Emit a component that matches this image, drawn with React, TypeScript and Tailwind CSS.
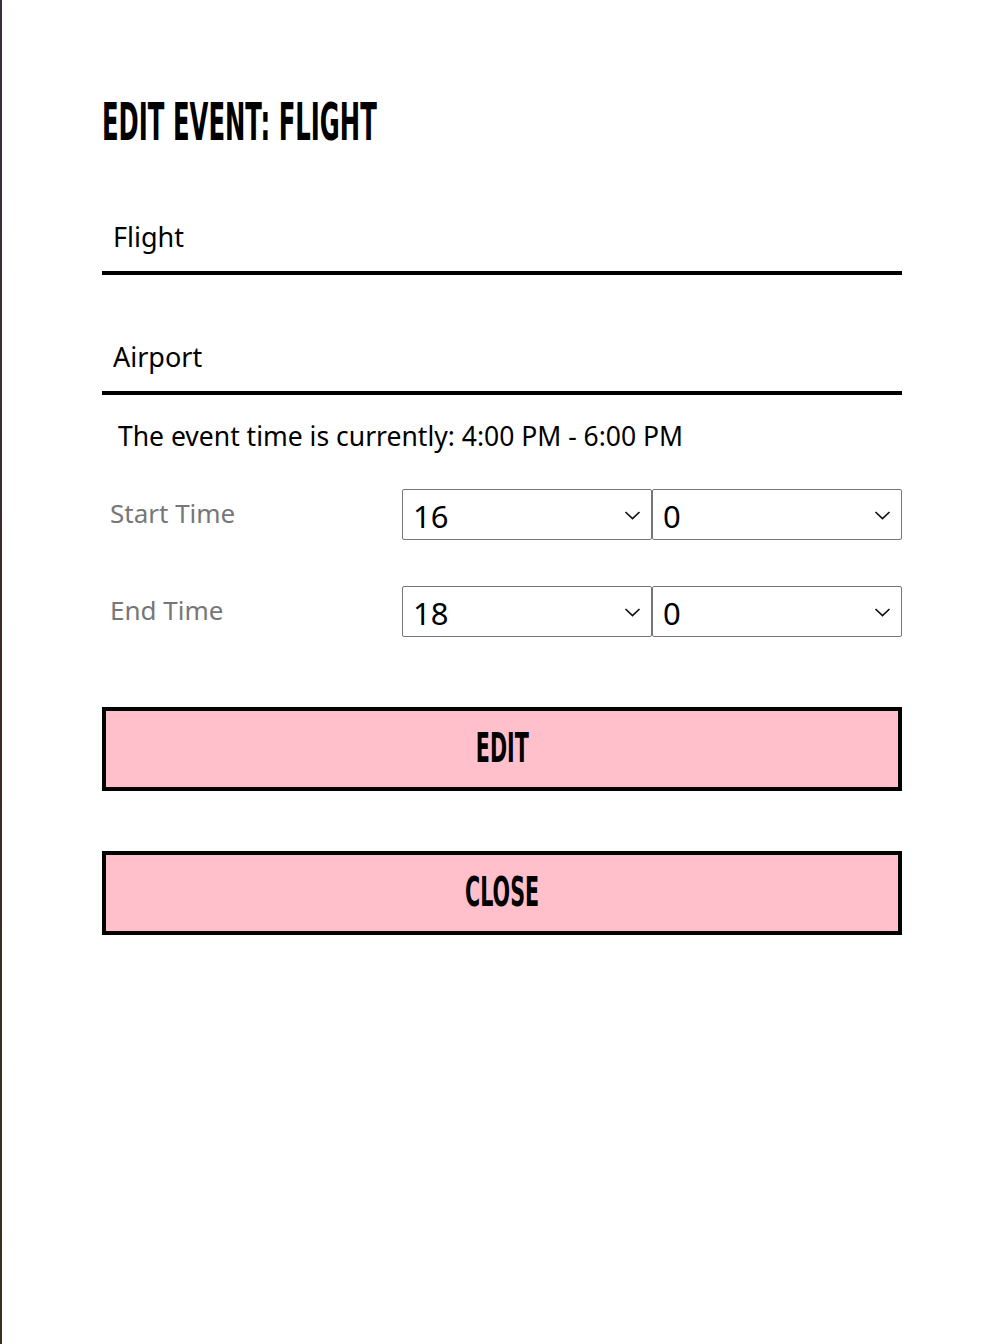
import { useState } from "react";

const hours = Array.from({ length: 24 }, (_, i) => i);
const minutes = [0, 15, 30, 45];

function Chevron() {
  return (
    <svg
      className="pointer-events-none absolute right-[11px] top-1/2 -translate-y-1/2"
      width="17"
      height="10"
      viewBox="0 0 17 10"
      fill="none"
    >
      <path d="M1.5 2 8.5 8.5 15.5 2" stroke="#111" strokeWidth="1.7" />
    </svg>
  );
}

function TimeSelect({
  value,
  options,
  onChange,
}: {
  value: number;
  options: number[];
  onChange: (v: number) => void;
}) {
  return (
    <div className="relative w-1/2">
      <select
        value={value}
        onChange={(event) => onChange(Number(event.target.value))}
        className="h-[51px] w-full appearance-none rounded-[2px] border border-[#767676] bg-white pl-[10px] pt-[3px] text-[31px] text-black outline-none"
      >
        {options.map((o) => (
          <option key={o} value={o}>
            {o}
          </option>
        ))}
      </select>
      <Chevron />
    </div>
  );
}

export default function App() {
  const [title, setTitle] = useState("Flight");
  const [location, setLocation] = useState("Airport");
  const [startHour, setStartHour] = useState(16);
  const [startMin, setStartMin] = useState(0);
  const [endHour, setEndHour] = useState(18);
  const [endMin, setEndMin] = useState(0);

  // stand-in for a condensed display face
  const display =
    "inline-block font-['DejaVu_Sans_Condensed','DejaVu_Sans',sans-serif] font-bold uppercase font-stretch-condensed";
  const inputClassName =
    "h-[56px] w-full border-0 border-b-4 border-black bg-transparent px-[11px] pb-[18px] text-[27px] text-black outline-none";
  const buttonClassName =
    "flex h-[84px] w-full items-center justify-center border-4 border-black bg-[#ffc0cb] text-black";

  return (
    <div className="flex min-h-[1344px] w-[1002px] bg-white font-['Noto_Sans','Open_Sans',sans-serif]">
      <div className="w-[2px] shrink-0 bg-gradient-to-b from-[#3b2f45] via-[#3d2a22] to-[#3a3020]" />
      <div className="pl-[100px] pt-[92px]">
        <div className="w-[800px]">
          <h1 className="h-[60px] leading-[60px]">
            <span className={`origin-left scale-x-[0.52] text-[52px] ${display}`}>
              Edit Event: Flight
            </span>
          </h1>

          <div className="mt-[67px]">
            <input
              type="text"
              value={title}
              onChange={(event) => setTitle(event.target.value)}
              className={inputClassName}
            />
          </div>
          <div className="mt-[64px]">
            <input
              type="text"
              value={location}
              onChange={(event) => setLocation(event.target.value)}
              className={inputClassName}
            />
          </div>

          <p className="mt-[21px] pl-[16px] text-[26.5px] leading-[40px] text-black">
            The event time is currently: 4:00 PM - 6:00 PM
          </p>

          <div className="mt-[33px] flex items-start">
            <label className="w-[300px] pl-[8px] text-[26px] leading-[48px] text-[#777]">
              Start Time
            </label>
            <div className="flex w-[500px]">
              <TimeSelect value={startHour} options={hours} onChange={setStartHour} />
              <TimeSelect value={startMin} options={minutes} onChange={setStartMin} />
            </div>
          </div>

          <div className="mt-[46px] flex items-start">
            <label className="w-[300px] pl-[8px] text-[26px] leading-[48px] text-[#777]">
              End Time
            </label>
            <div className="flex w-[500px]">
              <TimeSelect value={endHour} options={hours} onChange={setEndHour} />
              <TimeSelect value={endMin} options={minutes} onChange={setEndMin} />
            </div>
          </div>

          <button type="button" className={`mt-[70px] ${buttonClassName}`}>
            <span className={`scale-x-[0.56] text-[41px] ${display}`}>Edit</span>
          </button>
          <button type="button" className={`mt-[60px] ${buttonClassName}`}>
            <span className={`scale-x-[0.56] text-[41px] ${display}`}>Close</span>
          </button>
        </div>
      </div>
    </div>
  );
}
